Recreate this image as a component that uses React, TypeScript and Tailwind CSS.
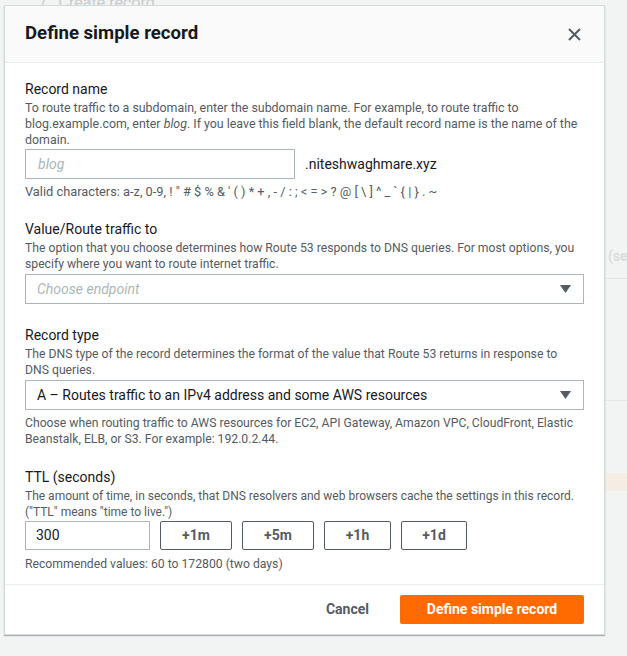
import React from "react";

function Caret() {
  return (
    <svg width="11" height="8" viewBox="0 0 11 8" className="shrink-0">
      <path d="M0 0 H11 L5.5 8 Z" fill="#545b64" />
    </svg>
  );
}

function Field({
  label,
  desc,
  descSize = "text-[12.2px]",
  gap = "mt-[1px]",
  children,
}: {
  label: string;
  desc: React.ReactNode;
  descSize?: string;
  gap?: string;
  children: React.ReactNode;
}) {
  return (
    <div>
      <div className="text-[14px] leading-[20px] text-[#16191f]">{label}</div>
      <p className={`mt-[1px] leading-[16px] text-[#545b64] ${descSize}`}>{desc}</p>
      <div className={gap}>{children}</div>
    </div>
  );
}

export default function App() {
  const ttlSteps = [
    { text: "+1m", w: "w-[72px]" },
    { text: "+5m", w: "w-[72px]" },
    { text: "+1h", w: "w-[67px]" },
    { text: "+1d", w: "w-[66px]" },
  ];

  return (
    <div className="relative h-[656px] w-[627px] overflow-hidden bg-[#f2f3f3] font-['Roboto',sans-serif]">
      {/* faded page behind the dialog */}
      <div className="absolute left-[40px] top-[-9px] text-[16px] text-[#c9cccc]">
        <span className="mr-3">/</span>Create record
      </div>
      <div className="absolute left-[608px] top-[246px] text-[14px] font-bold text-[#d9dcdc]">(se</div>
      <div className="absolute left-[605px] top-[278px] h-px w-[30px] bg-[#e3e6e6]" />
      <div className="absolute left-[605px] top-[400px] h-px w-[30px] bg-[#e3e6e6]" />
      <div className="absolute left-[605px] top-[473px] h-[18px] w-[30px] bg-[#f5ece4]" />

      <div className="absolute left-[4px] top-[5px] w-[601px] border border-[#d5dbdb] bg-white shadow-[0_1px_1px_0_rgba(0,28,36,0.3)]">
        <div className="flex h-[57px] items-center justify-between border-b border-[#eaeded] bg-[#fafafa] px-5">
          <h2 className="text-[18.6px] font-bold text-[#16191f]">Define simple record</h2>
          <svg width="13" height="13" viewBox="0 0 13 13" className="mr-[3px]">
            <path d="M1 1 L12 12 M12 1 L1 12" stroke="#545b64" strokeWidth="2" fill="none" />
          </svg>
        </div>

        <div className="flex flex-col px-5 pb-[12px] pt-[16px]">
          <div>
            <Field
              label="Record name"
              descSize="text-[12.4px]"
              desc={
                <>
                  To route traffic to a subdomain, enter the subdomain name. For example, to route traffic to
                  blog.example.com, enter <i>blog</i>. If you leave this field blank, the default record name is the
                  name of the domain.
                </>
              }
            >
              <div className="flex items-center gap-[10px]">
                <div className="flex h-[30px] w-[270px] items-center border border-[#aab7b8] px-[12px] text-[14px] italic text-[#aab7b8]">
                  blog
                </div>
                <span className="text-[14px] text-[#16191f]">.niteshwaghmare.xyz</span>
              </div>
            </Field>
            <p className="mt-[5px] text-[12.8px] leading-[16px] text-[#545b64]">
              Valid characters: a-z, 0-9, ! " # $ % &amp; ' ( ) * + , - / : ; &lt; = &gt; ? @ [ \ ] ^ _ ` {"{"} | {"}"} . ~
            </p>
          </div>

          <div className="mt-[19px]">
            <Field
              label="Value/Route traffic to"
              gap="mt-[2px]"
              desc="The option that you choose determines how Route 53 responds to DNS queries. For most options, you specify where you want to route internet traffic."
            >
              <div className="flex h-[30px] items-center justify-between border border-[#aab7b8] pl-[11px] pr-[12px]">
                <span className="text-[14px] italic text-[#aab7b8]">Choose endpoint</span>
                <Caret />
              </div>
            </Field>
          </div>

          <div className="mt-[21px]">
            <Field
              label="Record type"
              gap="mt-[2px]"
              desc="The DNS type of the record determines the format of the value that Route 53 returns in response to DNS queries."
            >
              <div className="flex h-[30px] items-center justify-between border border-[#aab7b8] pl-[11px] pr-[12px]">
                <span className="text-[14px] text-[#16191f]">A – Routes traffic to an IPv4 address and some AWS resources</span>
                <Caret />
              </div>
            </Field>
            <p className="mt-[5px] text-[12.2px] leading-[16px] text-[#545b64]">
              Choose when routing traffic to AWS resources for EC2, API Gateway, Amazon VPC, CloudFront, Elastic
              Beanstalk, ELB, or S3. For example: 192.0.2.44.
            </p>
          </div>

          <div className="mt-[20px]">
            <Field
              label="TTL (seconds)"
              descSize="text-[12px]"
              desc={'The amount of time, in seconds, that DNS resolvers and web browsers cache the settings in this record. ("TTL" means "time to live.")'}
            >
              <div className="flex items-center gap-[10px]">
                <div className="flex h-[29px] w-[125px] items-center border border-[#aab7b8] px-[10px] text-[14px] text-[#16191f]">
                  300
                </div>
                {ttlSteps.map((s) => (
                  <button
                    key={s.text}
                    className={`flex h-[29px] items-center justify-center rounded-[2px] border border-[#545b64] text-[14px] font-bold text-[#545b64] ${s.w}`}
                  >
                    {s.text}
                  </button>
                ))}
              </div>
            </Field>
            <p className="mt-[6px] text-[12.2px] leading-[16px] text-[#545b64]">
              Recommended values: 60 to 172800 (two days)
            </p>
          </div>
        </div>

        <div className="flex h-[50px] items-center justify-end gap-[31px] border-t border-[#eaeded] px-5">
          <button className="text-[14px] font-bold text-[#545b64]">Cancel</button>
          <button className="flex h-[29px] w-[184px] items-center justify-center rounded-[2px] bg-[#ff6b00] text-[14px] font-bold text-white">
            Define simple record
          </button>
        </div>
      </div>
    </div>
  );
}
